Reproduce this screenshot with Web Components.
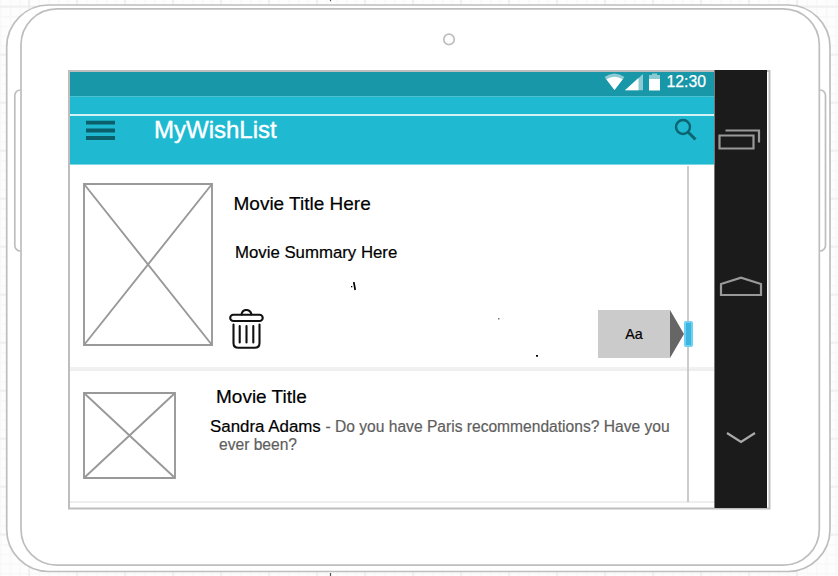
<!DOCTYPE html>
<html lang="en">
<head>
<meta charset="utf-8">
<title>MyWishList</title>
<style>
html,body{margin:0;width:838px;height:576px;overflow:hidden;font-family:"Liberation Sans",Arial,sans-serif;background:#fff}
</style>
</head>
<body>
<tablet-frame>
  <app-screen>
    <status-bar slot="top" time="12:30"></status-bar>
    <app-header slot="top">MyWishList</app-header>
    <featured-movie slot="list">
      <span slot="title">Movie Title Here</span>
      <span slot="summary">Movie Summary Here</span>
      <scroll-label slot="label">Aa</scroll-label>
    </featured-movie>
    <movie-comment slot="list">
      <span slot="title">Movie Title</span>
      <span slot="author">Sandra Adams</span>
      <span slot="text">- Do you have Paris recommendations? Have you</span>
      <span slot="more">ever been?</span>
    </movie-comment>
  </app-screen>
  <nav-rail></nav-rail>
</tablet-frame>
<script>
const define = (name, html, setup) => customElements.define(name, class extends HTMLElement {
  constructor() {
    super();
    const t = document.createElement('template');
    t.innerHTML = html;
    this.attachShadow({mode: 'open'}).append(t.content.cloneNode(true));
  }
  connectedCallback() { if (setup) setup(this, this.shadowRoot); }
});

define('tablet-frame', `
<style>
:host{display:grid;width:838px;height:576px}
.shell,.screen{grid-area:1/1}
.screen{margin:70px 67px 66px 68px;box-sizing:border-box;display:grid;grid-template-columns:646px 54px;position:relative}
</style>
<svg class="shell" width="838" height="576">
  <defs>
    <pattern id="minor" x="29" y="6.5" width="9.6" height="9.6" patternUnits="userSpaceOnUse"><path d="M0 0H9.6M0 0V9.6" stroke="#f8f8f8" stroke-width="3" fill="none"/></pattern>
    <pattern id="major" x="28" y="5.5" width="48" height="48" patternUnits="userSpaceOnUse"><path d="M0 1H48M1 0V48" stroke="#ededed" stroke-width="1.6" fill="none"/></pattern>
  </defs>
  <rect width="838" height="576" fill="#fdfdfd"/>
  <rect width="838" height="576" fill="url(#minor)"/>
  <rect width="838" height="576" fill="url(#major)"/>
  <path d="M330.500 0V1.200M330.500 573V576" stroke="#555" stroke-width="1.200"/>
  <g fill="#fff" stroke="#bebebe" stroke-width="1.700">
    <rect x="6.700" y="5" width="823.300" height="566.500" rx="42"/>
    <rect x="14.800" y="90" width="20" height="161" rx="5.500"/>
    <rect x="805" y="90" width="20.500" height="161" rx="5.500"/>
    <rect x="21" y="8.800" width="798.300" height="556.400" rx="36"/>
    <circle cx="449" cy="39.400" r="5.200"/>
    <rect x="69" y="71" width="700.500" height="437.500" stroke-width="2"/>
  </g>
</svg>
<div class="screen"><slot></slot></div>`);

define('app-screen', `
<style>
:host{display:block;padding:2px 0 0 2px;height:438px;box-sizing:border-box}
.track{position:absolute;left:619px;top:96px;width:2px;height:336px;background:#ccc}
.thumb{position:absolute;left:616px;top:251px;width:5px;height:22px;border:2px solid #6ed0f2;background:#3cb5e0;border-radius:2px}
.mark{position:absolute;left:282px;top:212px}
</style>
<slot name="top"></slot><slot name="list"></slot>
<i class="track"></i><i class="thumb"></i>
<svg class="mark" width="190" height="78"><path d="M3.800 0L5.200 8" stroke="#000" stroke-width="1.700"/><rect x="1" y="4" width="1.300" height="1.300"/><rect x="148" y="36" width="1.500" height="1.500" fill="#777"/><rect x="186" y="73" width="2" height="1.700"/></svg>`);

define('status-bar', `
<style>
:host{display:flex;height:24px;background:#1797a7;justify-content:flex-end;align-items:flex-start;color:#fff;font-size:15.8px;line-height:20px;padding-right:8px;border-bottom:1px solid #4bc1d1;-webkit-text-stroke:.25px}
svg{margin-right:6px}
</style>
<svg width="57" height="24"><path d="M1.500 5Q11.500 -2 21.500 5L11.500 18Z" fill="#8ccbd3"/><path d="M3.300 7.300Q11.500 2 19.700 7.300L11.500 18Z" fill="#fff"/><path d="M22 18.300L40 2V18.300Z" fill="#8ccbd3"/><path d="M22 18.300L35.500 6V18.300Z" fill="#fff"/><path d="M46 7V3H49V1.500H54V3H57V7Z" fill="#8ccbd3"/><path d="M46 7H57V18.500H46Z" fill="#fff"/></svg>
<span></span>`, (host, root) => { root.querySelector('span').textContent = host.getAttribute('time'); });

define('app-header', `
<style>
:host{display:block;height:67px;background:#1fbad2;border-bottom:1px solid #7fd6e3;box-sizing:content-box;color:#fff}
.strip{height:17px;border-bottom:2px solid #d3f2f6}
.row{display:flex;align-items:flex-start;height:48px;padding:0 17px 0 15px}
.menu{margin:4px 38px 0 0}
.title{flex:1;font-size:24px;line-height:28px;height:28px;-webkit-text-stroke:.4px}
.search{margin-top:2px}
</style>
<div class="strip"></div>
<div class="row">
<svg class="menu" width="31" height="22"><path d="M1 2.700H30M1 10.500H30M1 18H30" stroke="#0b5f6b" stroke-width="3.800"/></svg>
<div class="title"><slot></slot></div>
<svg class="search" width="23" height="24"><circle cx="9" cy="9" r="7" fill="none" stroke="#0b6470" stroke-width="2.400"/><path d="M14 14L21.500 21.500" stroke="#0b6470" stroke-width="3"/></svg>
</div>`);

define('image-box', `
<style>:host{display:block}svg{display:block}</style><svg><path fill="#fff" stroke="#999" stroke-width="1.900"/></svg>`, (host, root) => {
  const w = +host.getAttribute('w'), h = +host.getAttribute('h'), s = root.querySelector('svg');
  s.setAttribute('width', w);
  s.setAttribute('height', h);
  s.firstChild.setAttribute('d', `M1 1H${w - 1}V${h - 1}H1ZL${w - 1} ${h - 1}M1 ${h - 1}L${w - 1} 1`);
});

define('scroll-label', `
<style>
:host{display:flex;color:#000;font-size:14.3px}
.box{width:72px;height:48px;background:#cbcbcb;display:grid;place-items:center;line-height:48px}
.tip{width:14px;height:48px;background:#666;clip-path:polygon(0 0,100% 50%,0 100%)}
</style><div class="box"><slot></slot></div><div class="tip"></div>`);

define('featured-movie', `
<style>
:host{display:grid;grid-template-columns:130px 1fr;column-gap:16px;height:204px;box-sizing:border-box;padding:18px 30px 0 13px;background:#fff;border-bottom:2px solid #f1f1f1;color:#000;-webkit-text-stroke:.2px}
.body{display:flex;flex-direction:column}
.title{font-size:19px;line-height:22px;margin:10px 0 0 4.5px}
.summary{font-size:16.8px;line-height:20px;margin:28px 0 0 6px}
.foot{display:flex;justify-content:space-between;margin-top:47px}
.foot svg{margin-top:-1px}
</style>
<image-box w="130" h="163"></image-box>
<div class="body">
<div class="title"><slot name="title"></slot></div>
<div class="summary"><slot name="summary"></slot></div>
<div class="foot">
<svg width="36" height="42" viewBox="0 0 36 42" fill="none" stroke="#111" stroke-width="2.100" stroke-linecap="round"><path d="M12.500 5.500C13.500 -.5 21 -.5 22.500 5.500"/><rect x="1.200" y="5.800" width="32.500" height="6.200" rx="3.100"/><path d="M4.500 15.500V34Q4.500 38.800 9.500 38.800H25.500Q30.500 38.800 30.500 34V15.500M10.700 17V33.500M17.500 17V33.500M24.300 17V33.500"/></svg>
<slot name="label"></slot></div></div>`);

define('movie-comment', `
<style>
:host{display:grid;grid-template-columns:93px 1fr;column-gap:34px;height:134px;box-sizing:border-box;border-top:2px solid #eee;border-bottom:2px solid #eee;padding:21px 0 0 13px;background:#fff;color:#000;-webkit-text-stroke:.2px}
.title{font-size:19px;line-height:22px;margin:-6px 0 0 6px}
.line{font-size:16.9px;line-height:20px;margin-top:9px;white-space:nowrap}
.text{color:#5e5e5e;font-size:15.6px}
.more{color:#5e5e5e;font-size:15.6px;line-height:18px;margin:-1px 0 0 9px}
</style>
<image-box w="93" h="87"></image-box>
<div>
<div class="title"><slot name="title"></slot></div>
<div class="line"><slot name="author"></slot> <span class="text"><slot name="text"></slot></span></div>
<div class="more"><slot name="more"></slot></div></div>`);

define('nav-rail', `
<style>
:host{display:flex;flex-direction:column;align-items:center;width:53px;height:438px;background:#1b1b1b;border-left:1px solid #777;box-sizing:border-box}
.recent{margin:58px 3px 0 0}.home{margin-top:125px}.down{margin-top:132px}
svg{flex:none}
</style>
<svg class="recent" width="44" height="23" fill="none" stroke="#999" stroke-width="2.200"><path d="M1.500 7.500H35.500V20.500H1.500ZM7.500 2.500H41V14.500"/></svg>
<svg class="home" width="44" height="23" fill="none" stroke="#999" stroke-width="2.200"><path d="M2 8L22 1.700L42 8V19H2Z"/></svg>
<svg class="down" width="34" height="16" fill="none" stroke="#aaa" stroke-width="2.200"><path d="M3 2L17 11L31 2"/></svg>`);
</script>
</body>
</html>
